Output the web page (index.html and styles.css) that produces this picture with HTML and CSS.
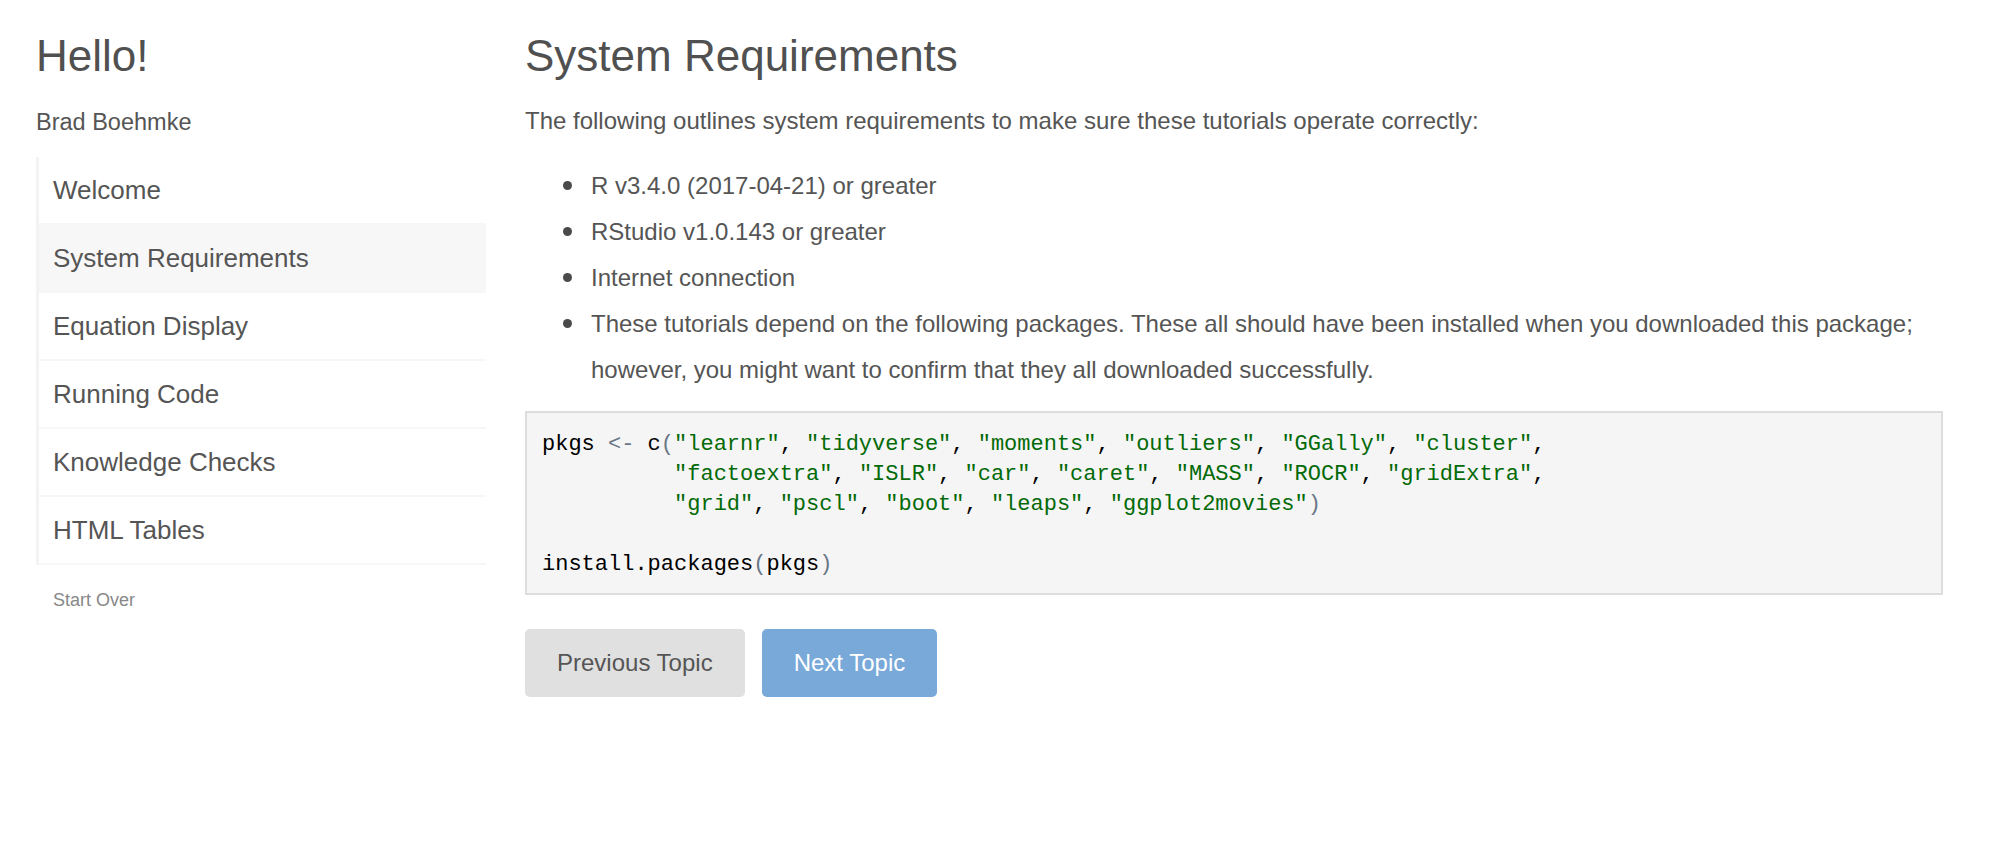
FILE: index.html
```html
<!DOCTYPE html>
<html lang="en">
<head>
<meta charset="utf-8">
<title>System Requirements</title>
<link rel="stylesheet" href="styles.css">
</head>
<body>
<div class="page">
  <aside class="sidebar">
    <h1 class="title">Hello!</h1>
    <div class="author">Brad Boehmke</div>
    <nav class="topics">
      <a class="topic">Welcome</a>
      <a class="topic active">System Requirements</a>
      <a class="topic">Equation Display</a>
      <a class="topic">Running Code</a>
      <a class="topic">Knowledge Checks</a>
      <a class="topic">HTML Tables</a>
    </nav>
    <a class="start-over">Start Over</a>
  </aside>
  <main class="content">
    <h1 class="title">System Requirements</h1>
    <p class="intro">The following outlines system requirements to make sure these tutorials operate correctly:</p>
    <ul class="reqs">
      <li><span>R v3.4.0 (2017-04-21) or greater</span></li>
      <li><span>RStudio v1.0.143 or greater</span></li>
      <li><span>Internet connection</span></li>
      <li><span>These tutorials depend on the following packages. These all should have been installed when you downloaded this package; however, you might want to confirm that they all downloaded successfully.</span></li>
    </ul>
<pre class="code"><code>pkgs <span class="op">&lt;-</span> c<span class="op">(</span><span class="str">"learnr"</span>, <span class="str">"tidyverse"</span>, <span class="str">"moments"</span>, <span class="str">"outliers"</span>, <span class="str">"GGally"</span>, <span class="str">"cluster"</span>,
          <span class="str">"factoextra"</span>, <span class="str">"ISLR"</span>, <span class="str">"car"</span>, <span class="str">"caret"</span>, <span class="str">"MASS"</span>, <span class="str">"ROCR"</span>, <span class="str">"gridExtra"</span>,
          <span class="str">"grid"</span>, <span class="str">"pscl"</span>, <span class="str">"boot"</span>, <span class="str">"leaps"</span>, <span class="str">"ggplot2movies"</span><span class="op">)</span>

install.packages<span class="op">(</span>pkgs<span class="op">)</span></code></pre>
    <div class="buttons">
      <button class="btn btn-prev">Previous Topic</button>
      <button class="btn btn-next">Next Topic</button>
    </div>
  </main>
</div>
</body>
</html>
```

FILE: styles.css
```css
html, body {
  margin: 0;
  padding: 0;
  background: #ffffff;
}

body {
  font-family: "Liberation Sans", Arial, Helvetica, sans-serif;
  color: #555555;
}

.page {
  display: flex;
  padding: 0 47px 0 36px;
  gap: 39px;
}

.sidebar {
  flex: 0 0 450px;
  display: flex;
  flex-direction: column;
}

.title {
  margin: 32px 0 0;
  font-size: 44px;
  line-height: 48px;
  font-weight: 400;
  color: #505050;
}

.author {
  margin-top: 26px;
  font-size: 23.5px;
  line-height: 32px;
  color: #555555;
}

.topics {
  margin-top: 19px;
  display: flex;
  flex-direction: column;
  border-left: 3px solid #f3f3f3;
}

.topic {
  display: block;
  height: 66px;
  line-height: 66px;
  padding-left: 14px;
  font-size: 26px;
  color: #555555;
  border-bottom: 2px solid #f7f7f7;
}

.topic.active {
  background: #f7f7f7;
}

.start-over {
  margin-top: 23px;
  padding-left: 17px;
  font-size: 18px;
  line-height: 24px;
  color: #888888;
}

.content {
  flex: 1 1 auto;
  min-width: 0;
}

.intro {
  margin: 25px 0 0;
  font-size: 24px;
  line-height: 32px;
}

.reqs {
  margin: 26px 0 0;
  padding-left: 38px;
  list-style: none;
  font-size: 24px;
  line-height: 46px;
}

.reqs li {
  display: flex;
  align-items: flex-start;
}

.reqs li::before {
  content: "";
  flex: 0 0 9px;
  height: 9px;
  margin: 18px 19px 0 0;
  border-radius: 50%;
  background: #4a4a4a;
}

.code {
  margin: 18px 0 0;
  padding: 17px 15px 13px;
  background: #f5f5f5;
  border: 2px solid #dddddd;
  font-family: "Liberation Mono", "Courier New", monospace;
  font-size: 22px;
  line-height: 30px;
  color: #000000;
  white-space: pre;
  overflow: hidden;
}

.code code {
  font-family: inherit;
  font-size: inherit;
  line-height: inherit;
}

.code .op {
  color: #687687;
}

.code .str {
  color: #036a07;
}

.buttons {
  margin-top: 34px;
  display: flex;
  gap: 17px;
}

.btn {
  height: 68px;
  padding: 0 32px;
  border: none;
  border-radius: 5px;
  font-family: "Liberation Sans", Arial, Helvetica, sans-serif;
  font-size: 24px;
}

.btn-prev {
  background: #e0e0e0;
  color: #555555;
}

.btn-next {
  background: #78a9d9;
  color: #ffffff;
}
```
